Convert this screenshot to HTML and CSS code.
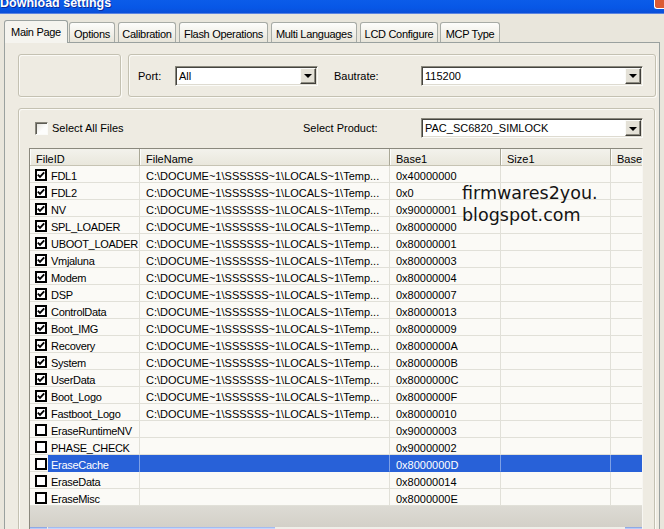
FILE: index.html
```html
<!DOCTYPE html>
<html>
<head>
<meta charset="utf-8">
<title>Download settings</title>
<link rel="stylesheet" href="styles.css">
</head>
<body>
<div class="window">
  <div class="titlebar">
    <span class="title">Download settings</span>
    <span class="close"></span>
  </div>
  <div class="tabs">
    <div class="tab active w-main">Main Page</div>
    <div class="tab w-options">Options</div>
    <div class="tab w-calib">Calibration</div>
    <div class="tab w-flash">Flash Operations</div>
    <div class="tab w-multi">Multi Languages</div>
    <div class="tab w-lcd">LCD Configure</div>
    <div class="tab w-mcp">MCP Type</div>
  </div>
  <div class="panel">
    <div class="top">
      <div class="group g1"></div>
      <div class="group g2">
        <span class="lbl lbl-port">Port:</span>
        <div class="combo port-combo"><span class="val">All</span><span class="btn"><i class="arrow"></i></span></div>
        <span class="lbl lbl-baud">Bautrate:</span>
        <div class="combo wide-combo"><span class="val">115200</span><span class="btn"><i class="arrow"></i></span></div>
      </div>
    </div>
    <div class="group g3">
      <div class="g3-head">
        <span class="cb13"></span>
        <span class="lbl-all">Select All Files</span>
        <span class="lbl lbl-prod">Select Product:</span>
        <div class="combo wide-combo"><span class="val">PAC_SC6820_SIMLOCK</span><span class="btn"><i class="arrow"></i></span></div>
      </div>
      <div class="list">
        <div class="lrow head">
          <div class="h">FileID</div><div class="h">FileName</div><div class="h">Base1</div><div class="h">Size1</div><div class="h">Base2</div>
        </div>

        <div class="lrow"><div class="c1"><span class="ckcell"><span class="ck"><svg viewBox="0 0 8 8" width="8" height="8"><path d="M0.8 3.6 L3 5.8 L7.2 1.4" fill="none" stroke="#000" stroke-width="1.9"/></svg></span></span><span class="lab">FDL1</span></div><div class="c">C:\DOCUME~1\SSSSSS~1\LOCALS~1\Temp...</div><div class="c">0x40000000</div><div class="c"></div><div class="c"></div></div>
        <div class="lrow"><div class="c1"><span class="ckcell"><span class="ck"><svg viewBox="0 0 8 8" width="8" height="8"><path d="M0.8 3.6 L3 5.8 L7.2 1.4" fill="none" stroke="#000" stroke-width="1.9"/></svg></span></span><span class="lab">FDL2</span></div><div class="c">C:\DOCUME~1\SSSSSS~1\LOCALS~1\Temp...</div><div class="c">0x0</div><div class="c"></div><div class="c"></div></div>
        <div class="lrow"><div class="c1"><span class="ckcell"><span class="ck"><svg viewBox="0 0 8 8" width="8" height="8"><path d="M0.8 3.6 L3 5.8 L7.2 1.4" fill="none" stroke="#000" stroke-width="1.9"/></svg></span></span><span class="lab">NV</span></div><div class="c">C:\DOCUME~1\SSSSSS~1\LOCALS~1\Temp...</div><div class="c">0x90000001</div><div class="c"></div><div class="c"></div></div>
        <div class="lrow"><div class="c1"><span class="ckcell"><span class="ck"><svg viewBox="0 0 8 8" width="8" height="8"><path d="M0.8 3.6 L3 5.8 L7.2 1.4" fill="none" stroke="#000" stroke-width="1.9"/></svg></span></span><span class="lab">SPL_LOADER</span></div><div class="c">C:\DOCUME~1\SSSSSS~1\LOCALS~1\Temp...</div><div class="c">0x80000000</div><div class="c"></div><div class="c"></div></div>
        <div class="lrow"><div class="c1"><span class="ckcell"><span class="ck"><svg viewBox="0 0 8 8" width="8" height="8"><path d="M0.8 3.6 L3 5.8 L7.2 1.4" fill="none" stroke="#000" stroke-width="1.9"/></svg></span></span><span class="lab">UBOOT_LOADER</span></div><div class="c">C:\DOCUME~1\SSSSSS~1\LOCALS~1\Temp...</div><div class="c">0x80000001</div><div class="c"></div><div class="c"></div></div>
        <div class="lrow"><div class="c1"><span class="ckcell"><span class="ck"><svg viewBox="0 0 8 8" width="8" height="8"><path d="M0.8 3.6 L3 5.8 L7.2 1.4" fill="none" stroke="#000" stroke-width="1.9"/></svg></span></span><span class="lab">Vmjaluna</span></div><div class="c">C:\DOCUME~1\SSSSSS~1\LOCALS~1\Temp...</div><div class="c">0x80000003</div><div class="c"></div><div class="c"></div></div>
        <div class="lrow"><div class="c1"><span class="ckcell"><span class="ck"><svg viewBox="0 0 8 8" width="8" height="8"><path d="M0.8 3.6 L3 5.8 L7.2 1.4" fill="none" stroke="#000" stroke-width="1.9"/></svg></span></span><span class="lab">Modem</span></div><div class="c">C:\DOCUME~1\SSSSSS~1\LOCALS~1\Temp...</div><div class="c">0x80000004</div><div class="c"></div><div class="c"></div></div>
        <div class="lrow"><div class="c1"><span class="ckcell"><span class="ck"><svg viewBox="0 0 8 8" width="8" height="8"><path d="M0.8 3.6 L3 5.8 L7.2 1.4" fill="none" stroke="#000" stroke-width="1.9"/></svg></span></span><span class="lab">DSP</span></div><div class="c">C:\DOCUME~1\SSSSSS~1\LOCALS~1\Temp...</div><div class="c">0x80000007</div><div class="c"></div><div class="c"></div></div>
        <div class="lrow"><div class="c1"><span class="ckcell"><span class="ck"><svg viewBox="0 0 8 8" width="8" height="8"><path d="M0.8 3.6 L3 5.8 L7.2 1.4" fill="none" stroke="#000" stroke-width="1.9"/></svg></span></span><span class="lab">ControlData</span></div><div class="c">C:\DOCUME~1\SSSSSS~1\LOCALS~1\Temp...</div><div class="c">0x80000013</div><div class="c"></div><div class="c"></div></div>
        <div class="lrow"><div class="c1"><span class="ckcell"><span class="ck"><svg viewBox="0 0 8 8" width="8" height="8"><path d="M0.8 3.6 L3 5.8 L7.2 1.4" fill="none" stroke="#000" stroke-width="1.9"/></svg></span></span><span class="lab">Boot_IMG</span></div><div class="c">C:\DOCUME~1\SSSSSS~1\LOCALS~1\Temp...</div><div class="c">0x80000009</div><div class="c"></div><div class="c"></div></div>
        <div class="lrow"><div class="c1"><span class="ckcell"><span class="ck"><svg viewBox="0 0 8 8" width="8" height="8"><path d="M0.8 3.6 L3 5.8 L7.2 1.4" fill="none" stroke="#000" stroke-width="1.9"/></svg></span></span><span class="lab">Recovery</span></div><div class="c">C:\DOCUME~1\SSSSSS~1\LOCALS~1\Temp...</div><div class="c">0x8000000A</div><div class="c"></div><div class="c"></div></div>
        <div class="lrow"><div class="c1"><span class="ckcell"><span class="ck"><svg viewBox="0 0 8 8" width="8" height="8"><path d="M0.8 3.6 L3 5.8 L7.2 1.4" fill="none" stroke="#000" stroke-width="1.9"/></svg></span></span><span class="lab">System</span></div><div class="c">C:\DOCUME~1\SSSSSS~1\LOCALS~1\Temp...</div><div class="c">0x8000000B</div><div class="c"></div><div class="c"></div></div>
        <div class="lrow"><div class="c1"><span class="ckcell"><span class="ck"><svg viewBox="0 0 8 8" width="8" height="8"><path d="M0.8 3.6 L3 5.8 L7.2 1.4" fill="none" stroke="#000" stroke-width="1.9"/></svg></span></span><span class="lab">UserData</span></div><div class="c">C:\DOCUME~1\SSSSSS~1\LOCALS~1\Temp...</div><div class="c">0x8000000C</div><div class="c"></div><div class="c"></div></div>
        <div class="lrow"><div class="c1"><span class="ckcell"><span class="ck"><svg viewBox="0 0 8 8" width="8" height="8"><path d="M0.8 3.6 L3 5.8 L7.2 1.4" fill="none" stroke="#000" stroke-width="1.9"/></svg></span></span><span class="lab">Boot_Logo</span></div><div class="c">C:\DOCUME~1\SSSSSS~1\LOCALS~1\Temp...</div><div class="c">0x8000000F</div><div class="c"></div><div class="c"></div></div>
        <div class="lrow"><div class="c1"><span class="ckcell"><span class="ck"><svg viewBox="0 0 8 8" width="8" height="8"><path d="M0.8 3.6 L3 5.8 L7.2 1.4" fill="none" stroke="#000" stroke-width="1.9"/></svg></span></span><span class="lab">Fastboot_Logo</span></div><div class="c">C:\DOCUME~1\SSSSSS~1\LOCALS~1\Temp...</div><div class="c">0x80000010</div><div class="c"></div><div class="c"></div></div>
        <div class="lrow"><div class="c1"><span class="ckcell"><span class="ck"></span></span><span class="lab">EraseRuntimeNV</span></div><div class="c"></div><div class="c">0x90000003</div><div class="c"></div><div class="c"></div></div>
        <div class="lrow"><div class="c1"><span class="ckcell"><span class="ck"></span></span><span class="lab">PHASE_CHECK</span></div><div class="c"></div><div class="c">0x90000002</div><div class="c"></div><div class="c"></div></div>
        <div class="lrow sel"><div class="c1"><span class="ckcell"><span class="ck"></span></span><span class="lab">EraseCache</span></div><div class="c"></div><div class="c">0x8000000D</div><div class="c"></div><div class="c"></div></div>
        <div class="lrow"><div class="c1"><span class="ckcell"><span class="ck"></span></span><span class="lab">EraseData</span></div><div class="c"></div><div class="c">0x80000014</div><div class="c"></div><div class="c"></div></div>
        <div class="lrow"><div class="c1"><span class="ckcell"><span class="ck"></span></span><span class="lab">EraseMisc</span></div><div class="c"></div><div class="c">0x8000000E</div><div class="c"></div><div class="c"></div></div>

        <div class="band"></div>
        <div class="hscroll">
          <span class="sb-btn"></span>
          <span class="sb-thumb"></span>
          <span class="sb-track"></span>
          <span class="sb-btn"></span>
        </div>
      </div>
    </div>
  </div>
  <div class="watermark">firmwares2you.<br>blogspot.com</div>
</div>
</body>
</html>
```
FILE: styles.css
```css
* { box-sizing: border-box; margin: 0; padding: 0; }
html, body { width: 664px; height: 529px; overflow: hidden; }
body {
  background: #e9e6dc;
  font-family: "Liberation Sans", Arial, sans-serif;
  font-size: 11px;
  color: #000;
}
.window {
  position: relative;
  width: 664px;
  height: 529px;
  overflow: hidden;
  background: #e9e6dc;
}

/* title bar */
.titlebar {
  height: 14px;
  display: flex;
  align-items: flex-start;
  background: linear-gradient(#0b5ce9, #0757e6 60%, #0a4fd8);
  border-bottom: 1px solid #5a83e0;
  overflow: hidden;
}
.title {
  color: #fff;
  font-weight: bold;
  font-size: 12.5px;
  line-height: 12px;
  margin-top: -3px;
  white-space: nowrap;
  text-shadow: 1px 1px 0 #0a2a9a;
}
.close {
  margin-left: auto;
  width: 10px;
  height: 9px;
  background: #dc5a33;
  border-left: 1px solid #fff;
  border-bottom: 1px solid #fff;
  border-bottom-left-radius: 3px;
}

/* tabs */
.tabs {
  display: flex;
  align-items: flex-end;
  height: 28px;
  padding: 6px 0 0 4px;
}
.tab {
  height: 20px;
  padding-top: 3px;
  line-height: 17px;
  text-align: center;
  white-space: nowrap;
  letter-spacing: -0.3px;
  border: 1px solid #a7aba6;
  border-bottom: none;
  border-radius: 3px 3px 0 0;
  background: linear-gradient(#fdfdfb, #f1efe8 60%, #e7e4d9);
  margin-right: 3px;
}
.tab.active {
  height: 23px;
  margin-bottom: -1px;
  margin-right: 1px;
  position: relative;
  z-index: 1;
  border-color: #9aa19f;
  background: #f5f4ef;
}
.w-main { width: 64px; }
.w-options { width: 46px; }
.w-calib { width: 58px; }
.w-flash { width: 89px; }
.w-multi { width: 86px; }
.w-lcd { width: 78px; margin-right: 2px; }
.w-mcp { width: 60px; }

/* panel */
.panel {
  margin-left: 4px;
  width: 656px;
  height: 500px;
  border: 1px solid #9aa19f;
  background: #eeebe2;
  padding: 11px 0 0 13px;
}
.top {
  display: flex;
  gap: 7px;
  height: 43px;
}
.group {
  border: 1px solid #c4c1b2;
  border-radius: 3px;
  box-shadow: inset 1px 1px 0 #fbfaf6, 1px 1px 0 #fbfaf6;
}
.g1 { width: 103px; }
.g2 {
  width: 528px;
  display: flex;
  align-items: center;
  padding-left: 9px;
}
.lbl { white-space: nowrap; }
.lbl-port { width: 37px; }
.lbl-baud { width: 87px; margin-left: 16px; }
.port-combo { width: 143px; }
.wide-combo { width: 222px; }

/* combo box */
.combo {
  display: flex;
  height: 20px;
  background: #fff;
  border: 1px solid;
  border-color: #8a887d #fbfbf8 #fbfbf8 #8a887d;
  box-shadow: inset 1px 1px 0 #45443f, inset -1px -1px 0 #dedbd1;
}
.combo .val {
  flex: 1;
  padding-left: 3px;
  line-height: 18px;
  white-space: nowrap;
  overflow: hidden;
}
.combo .btn {
  width: 16px;
  margin: 1px 1px 1px 0;
  background: #e4e1d7;
  border: 1px solid;
  border-color: #fbfbf8 #403f3a #403f3a #fbfbf8;
  box-shadow: inset -1px -1px 0 #8d8b80;
  display: flex;
  align-items: center;
  justify-content: center;
}
.arrow {
  width: 0;
  height: 0;
  border-left: 4px solid transparent;
  border-right: 4px solid transparent;
  border-top: 4px solid #000;
  margin-top: 1px;
}

/* group 3 */
.g3 {
  margin-top: 11px;
  width: 637px;
  height: 440px;
  padding: 9px 11px 0 10px;
  overflow: hidden;
}
.g3-head {
  display: flex;
  align-items: center;
  height: 20px;
  padding-left: 6px;
}
.cb13 {
  width: 13px;
  height: 13px;
  border: 1px solid;
  border-color: #8a887d #fbfbf8 #fbfbf8 #8a887d;
  box-shadow: inset 1px 1px 0 #5d5c55;
  background: linear-gradient(135deg, #e3e1da, #fdfdfc 60%);
}
.lbl-all { margin-left: 4px; }
.lbl-prod { margin-left: auto; width: 118px; }

/* list view */
.list {
  margin-top: 10px;
  width: 614px;
  height: 420px;
  border: 1px solid;
  border-color: #8a887d #f7f6f2 #f7f6f2 #8a887d;
  background: #fbfaf6;
  overflow: hidden;
}
.lrow {
  display: grid;
  grid-template-columns: 110px 250px 111px 110px 120px;
  height: 17px;
}
.h {
  height: 17px;
  padding: 4px 0 0 6px;
  line-height: 13px;
  white-space: nowrap;
  background: linear-gradient(#f3f2ec, #e9e7dc);
  border-right: 1px solid #a9a796;
  border-bottom: 1px solid #c6c3b3;
  box-shadow: inset 1px 0 0 #fdfdfb;
}
.c {
  height: 17px;
  padding: 4px 0 0 6px;
  line-height: 13px;
  white-space: nowrap;
  overflow: hidden;
  border-right: 1px solid #e1e0d8;
  border-bottom: 1px solid #e1e0d8;
}
.c1 {
  display: flex;
  height: 17px;
  border-right: 1px solid #e1e0d8;
}
.ckcell {
  width: 18px;
  padding: 3px 0 0 5px;
  border-bottom: 1px solid #e1e0d8;
}
.ck {
  display: flex;
  align-items: center;
  justify-content: center;
  width: 12px;
  height: 12px;
  border: 2px solid #000;
  background: #fff;
}
.lab {
  flex: 1;
  padding: 4px 0 0 3px;
  line-height: 13px;
  white-space: nowrap;
  overflow: hidden;
  letter-spacing: -0.3px;
  border-bottom: 1px solid #e1e0d8;
}
.sel .lab,
.sel .c {
  background: #2861d8;
  color: #fff;
  border-bottom-color: #2861d8;
}
.sel .c { border-right-color: #7ea0e6; }
.sel .c1 { border-right-color: #7ea0e6; }

.band {
  height: 21px;
  background: linear-gradient(#dddbd4, #d3d0c8);
}
.hscroll {
  display: flex;
  height: 17px;
  background: #f0efe9;
}
.sb-btn {
  width: 17px;
  background: #b8cbf6;
  border-top: 1px solid #8fa9e6;
}
.sb-thumb {
  width: 227px;
  margin-left: 1px;
  background: #c6d6fb;
  border-top: 1px solid #a4bcf1;
}
.sb-track { flex: 1; }

/* overlay watermark */
.watermark {
  position: absolute;
  left: 462px;
  top: 182px;
  font-family: "DejaVu Sans", Verdana, sans-serif;
  font-size: 17.5px;
  line-height: 22px;
  color: #141414;
  white-space: nowrap;
}
```
